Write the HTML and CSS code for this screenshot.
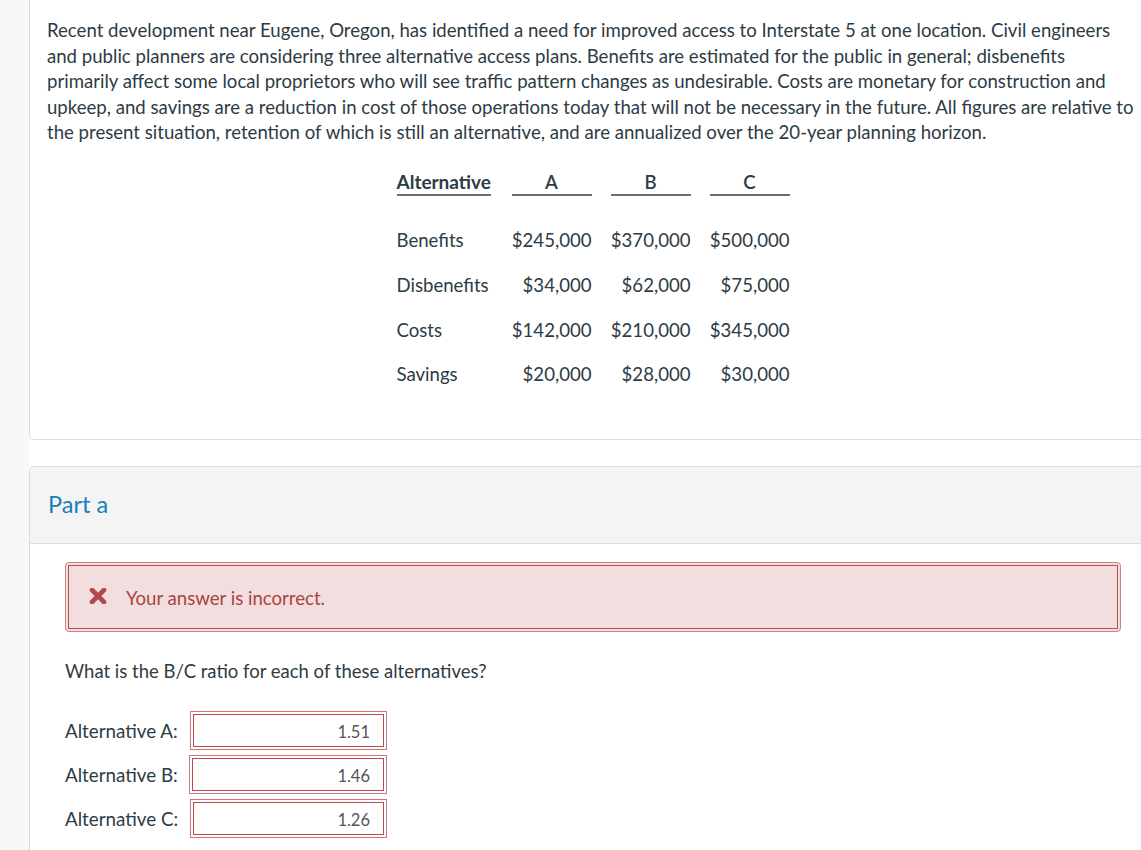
FILE: index.html
```html
<!DOCTYPE html>
<html lang="en">
<head>
<meta charset="utf-8">
<title>B/C ratio question</title>
<link rel="stylesheet" href="styles.css">
</head>
<body>
<div class="page">
  <div class="sidebar"></div>
  <main class="main">
    <section class="card card-top">
      <p class="intro">Recent development near Eugene, Oregon, has identified a need for improved access to Interstate 5 at one location. Civil engineers and public planners are considering three alternative access plans. Benefits are estimated for the public in general; disbenefits primarily affect some local proprietors who will see traffic pattern changes as undesirable. Costs are monetary for construction and upkeep, and savings are a reduction in cost of those operations today that will not be necessary in the future. All figures are relative to the present situation, retention of which is still an alternative, and are annualized over the 20-year planning horizon.</p>
      <div class="table-wrap">
        <div class="data-table">
          <div class="th th-first">Alternative</div>
          <div class="th th-col">A</div>
          <div class="th th-col">B</div>
          <div class="th th-col">C</div>

          <div class="td td-label">Benefits</div>
          <div class="td num">$245,000</div>
          <div class="td num">$370,000</div>
          <div class="td num">$500,000</div>

          <div class="td td-label">Disbenefits</div>
          <div class="td num">$34,000</div>
          <div class="td num">$62,000</div>
          <div class="td num">$75,000</div>

          <div class="td td-label">Costs</div>
          <div class="td num">$142,000</div>
          <div class="td num">$210,000</div>
          <div class="td num">$345,000</div>

          <div class="td td-label">Savings</div>
          <div class="td num">$20,000</div>
          <div class="td num">$28,000</div>
          <div class="td num">$30,000</div>
        </div>
      </div>
    </section>

    <section class="card card-part">
      <header class="part-head">
        <h2 class="part-title">Part a</h2>
      </header>
      <div class="part-body">
        <div class="alert">
          <div class="alert-inner">
            <svg class="x-icon" width="18" height="16" viewBox="0 0 18 16" aria-hidden="true">
              <path d="M3 2 L15 14 M15 2 L3 14" stroke="#b04a4a" stroke-width="4.6" stroke-linecap="round" fill="none"/>
            </svg>
            <span class="alert-text">Your answer is incorrect.</span>
          </div>
        </div>
        <p class="question">What is the B/C ratio for each of these alternatives?</p>
        <div class="answers">
          <label class="ans-label">Alternative A:</label>
          <div class="ans-box"><div class="ans-input">1.51</div></div>
          <label class="ans-label">Alternative B:</label>
          <div class="ans-box shift"><div class="ans-input">1.46</div></div>
          <label class="ans-label">Alternative C:</label>
          <div class="ans-box"><div class="ans-input">1.26</div></div>
        </div>
      </div>
    </section>
  </main>
</div>
</body>
</html>
```
FILE: styles.css
```css
html, body {
  margin: 0;
  padding: 0;
  overflow: hidden;
}
body {
  font-family: Lato, "Open Sans", "Liberation Sans", sans-serif;
  color: #2d3b45;
  background: #ffffff;
}
.page {
  display: flex;
  min-height: 850px;
  width: 1160px;
}
.sidebar {
  width: 29px;
  flex: none;
  background: #f8f8f8;
}
.main {
  width: 1128px;
  flex: none;
  background: #ffffff;
}
.card {
  border: 1px solid #dcdcdc;
  background: #ffffff;
}
.card-top {
  border-top: none;
  border-radius: 0 0 5px 5px;
  padding: 18px 17px 52px 17px;
}
.intro {
  margin: 0;
  font-size: 18.6px;
  line-height: 25.5px;
}
.table-wrap {
  display: flex;
  justify-content: center;
  margin-top: 24px;
}
.data-table {
  display: grid;
  grid-template-columns: 96px 80px 80px 80px;
  column-gap: 19px;
  row-gap: 19.7px;
  font-size: 18.6px;
  align-items: start;
}
.th {
  font-weight: 700;
  line-height: 24px;
  border-bottom: 2px solid #6b6f73;
  margin-bottom: 13px;
}
.th-first {
  justify-self: start;
  font-size: 19px;
}
.th-col {
  text-align: center;
  font-weight: 600;
}
.td {
  line-height: 25px;
  white-space: nowrap;
}
.num {
  text-align: right;
}
.card-part {
  margin-top: 26px;
  border-radius: 5px 5px 0 0;
  border-bottom: none;
  min-height: 400px;
}
.part-head {
  background: #f4f4f4;
  border-bottom: 1px solid #dcdcdc;
  border-radius: 5px 5px 0 0;
  height: 76px;
  display: flex;
  align-items: center;
  padding-left: 18px;
}
.part-title {
  margin: 0;
  font-weight: 400;
  font-size: 23.5px;
  color: #1580b6;
  padding-bottom: 2px;
}
.part-body {
  padding: 18px 35px 0 35px;
}
.alert {
  border: 1px solid #cc8585;
  border-radius: 4px;
  padding: 2px;
  background: #f2dede;
}
.alert-inner {
  border: 1px solid #c24b4b;
  height: 62px;
  display: flex;
  align-items: center;
  padding-left: 20px;
  gap: 19px;
}
.x-icon {
  flex: none;
  margin-top: -2px;
}
.alert-text {
  font-size: 18.6px;
  color: #a94442;
  padding-top: 2px;
}
.question {
  margin: 27px 0 0 0;
  font-size: 18.5px;
  line-height: 25px;
}
.answers {
  margin-top: 27px;
  display: grid;
  grid-template-columns: 125px 197px;
  row-gap: 5px;
  align-items: center;
}
.ans-label {
  font-size: 18.8px;
  line-height: 25px;
}
.ans-box {
  height: 39px;
  box-sizing: border-box;
  border: 1px solid #c97a7a;
  padding: 2px;
  background: #ffffff;
}
.ans-box.shift {
  margin-left: -1px;
}
.ans-input {
  box-sizing: border-box;
  height: 100%;
  border: 1px solid #bf4a4a;
  font-size: 16.5px;
  color: #555555;
  display: flex;
  align-items: center;
  justify-content: flex-end;
  padding-right: 13px;
  padding-top: 2px;
}
```
